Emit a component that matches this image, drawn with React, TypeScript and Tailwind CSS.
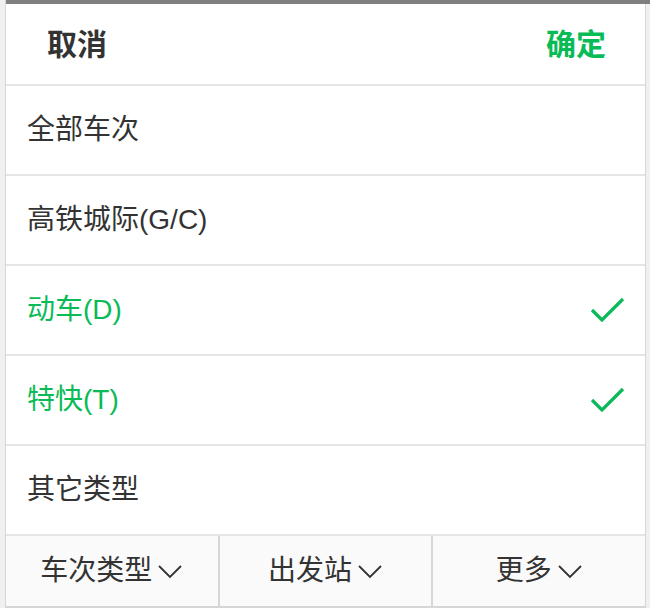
const FONT = "font-['Liberation_Sans','Noto_Sans_CJK_SC',sans-serif]";

const rows = [
  { label: "全部车次", on: false },
  { label: "高铁城际(G/C)", on: false },
  { label: "动车(D)", on: true },
  { label: "特快(T)", on: true },
  { label: "其它类型", on: false },
];

const tabs = ["车次类型", "出发站", "更多"];

function Check() {
  return (
    <svg width="38" height="30" viewBox="0 0 38 30" fill="none">
      <path d="M3 15 L13 25 L34 4" stroke="#09bb57" strokeWidth="3.2" />
    </svg>
  );
}

function Chevron() {
  return (
    <svg width="26" height="16" viewBox="0 0 26 16" fill="none">
      <path d="M2 3 L13 14 L24 3" stroke="#333" strokeWidth="1.8" />
    </svg>
  );
}

export default function App() {
  return (
    <div className={`w-[650px] h-[608px] bg-[#f0f0f0] pl-[5px] ${FONT}`}>
      <div className="flex h-full w-[641px] flex-col border-x border-[#d6d6d6] bg-white">
        <div className="-mr-[6px] h-[4px] bg-[#7f7f7f]" />

        {/* header */}
        <div className="flex h-[82px] items-center justify-between border-b-2 border-[#e5e5e5] pl-[41px] pr-[39px] text-[30px] font-bold">
          <span className="text-[#333]">取消</span>
          <span className="text-[#09bb57]">确定</span>
        </div>

        {rows.map((r) => (
          <div
            key={r.label}
            className={`flex h-[90px] items-center justify-between border-b-2 border-[#e5e5e5] pl-[21px] pr-[18px] text-[28px] ${
              r.on ? "text-[#09bb57]" : "text-[#333]"
            }`}
          >
            <span>{r.label}</span>
            {r.on && <Check />}
          </div>
        ))}

        {/* bottom tabs */}
        <div className="flex h-[72px] border-b-2 border-[#d6d6d6] bg-[#fafafa]">
          {tabs.map((t, i) => (
            <div
              key={t}
              className={`flex flex-1 items-center justify-center gap-[5px] text-[28px] text-[#333] ${
                i > 0 ? "border-l-2 border-[#d6d6d6]" : ""
              }`}
            >
              <span>{t}</span>
              <Chevron />
            </div>
          ))}
        </div>
      </div>
    </div>
  );
}
